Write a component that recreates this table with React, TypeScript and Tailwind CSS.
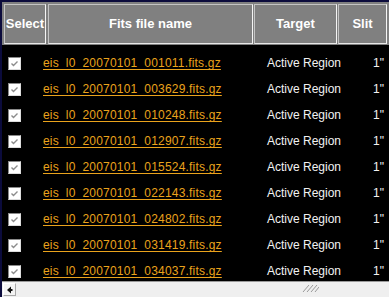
import React from "react";

const files = [
  "eis_l0_20070101_001011.fits.gz",
  "eis_l0_20070101_003629.fits.gz",
  "eis_l0_20070101_010248.fits.gz",
  "eis_l0_20070101_012907.fits.gz",
  "eis_l0_20070101_015524.fits.gz",
  "eis_l0_20070101_022143.fits.gz",
  "eis_l0_20070101_024802.fits.gz",
  "eis_l0_20070101_031419.fits.gz",
  "eis_l0_20070101_034037.fits.gz",
];

function HeaderCell({ label, className }: { label: string; className: string }) {
  return (
    <div
      className={`flex items-center justify-center border border-[#c4c4c4] border-r-[#f4f4f4] border-b-[#e8e8e8] text-[13px] font-bold text-white ${className}`}
    >
      {label}
    </div>
  );
}

function CheckBox() {
  return (
    <div className="w-[13px] h-[13px] bg-white border border-[#8a8a8a] border-r-[#dcdcdc] border-b-[#dcdcdc] flex items-center justify-center">
      <svg width="9" height="9" viewBox="0 0 9 9">
        <path d="M1.5 4.5 L3.5 6.5 L7.5 2.5" fill="none" stroke="#8c8c8c" strokeWidth="1.4" />
      </svg>
    </div>
  );
}

export default function App() {
  return (
    <div
      className="w-[389px] h-[297px] bg-black border-t-2 border-l-2 border-[#0b0b3c] overflow-hidden flex flex-col"
      style={{ fontFamily: '"Liberation Sans", Arial, sans-serif' }}
    >
      {/* Column headers */}
      <div className="h-[43px] shrink-0 bg-[#808080] flex pt-[2px] pb-[1px] pl-[2px]">
        <HeaderCell label="Select" className="w-[42px]" />
        <HeaderCell label="Fits file name" className="w-[205px] ml-[2px]" />
        <HeaderCell label="Target" className="w-[83px] ml-[1px]" />
        <HeaderCell label="Slit" className="w-[49px] ml-[1px]" />
      </div>

      {/* Rows */}
      <div className="flex-1 overflow-hidden pt-[5px]">
        {files.map((name) => (
          <div key={name} className="h-[26px] flex items-center text-[12px]">
            <div className="ml-[6px] w-[35px] shrink-0">
              <CheckBox />
            </div>
            <a className="w-[224px] shrink-0 text-[#eaa31c] underline underline-offset-2 tracking-[0.2px]">
              {name}
            </a>
            <span className="w-[106px] shrink-0 text-[#f2f2f2]">Active Region</span>
            <span className="text-[#f2f2f2]">1"</span>
          </div>
        ))}
      </div>

      {/* Horizontal scrollbar */}
      <div className="h-[16px] shrink-0 bg-[#efefef] border-t border-[#9a9a9a] flex items-center pl-[1px] relative">
        <div className="w-[13px] h-[13px] bg-[#f4f4f4] border border-white border-r-[#a8a8a8] border-b-[#a8a8a8] flex items-center justify-center">
          <svg width="7" height="8" viewBox="0 0 7 8">
            <path d="M5 0.5 L1 4 L5 7.5 Z" fill="#111" />
            <rect x="5" y="3" width="1.5" height="2" fill="#111" />
          </svg>
        </div>
        <svg className="absolute left-[300px] top-[2px]" width="17" height="9" viewBox="0 0 17 9">
          <path d="M1 8 L7 1 M5 8 L11 1 M9 8 L15 1 M13 8 L17 3" stroke="#9a9a9a" strokeWidth="1" />
        </svg>
      </div>
    </div>
  );
}
